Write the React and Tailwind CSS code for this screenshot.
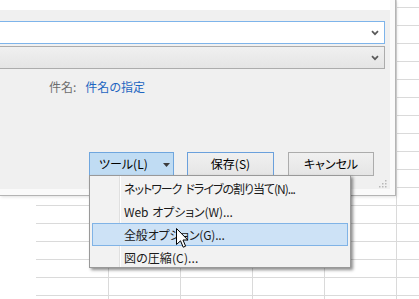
import React from "react";

const font = "font-['Noto_Sans_CJK_JP','Noto_Sans',sans-serif] [font-feature-settings:'palt']";

function Chevron() {
  return (
    <svg width="8" height="6" viewBox="0 0 8 6" className="absolute right-[5px] top-[8px]">
      <path d="M1 1.2 L4 4.2 L7 1.2" fill="none" stroke="#5a5a5a" strokeWidth="1.7" />
    </svg>
  );
}

export default function App() {
  const rows = Array.from({ length: 17 });
  const cols = Array.from({ length: 5 });
  const items = [
    { a: "ネットワーク", b: "ドライブの割り当て(N)...", cls: "tracking-[-1px]" },
    { a: "Web", b: "オプション(W)...", cls: "tracking-[-0.1px]" },
    { a: "全般オプション(G)...", b: null, cls: "tracking-[-0.2px]" },
    { a: "図の圧縮(C)...", b: null, cls: "tracking-[0.1px]" },
  ];
  return (
    <div className={`relative w-[419px] h-[299px] overflow-hidden bg-white ${font}`}>
      {/* spreadsheet grid (canvas) */}
      <div className="absolute inset-0 flex flex-col pl-[36px] pt-[7px]">
        {rows.map((_, i) => (
          <div key={i} className="h-[18px] shrink-0 border-t border-[#dadada]" />
        ))}
      </div>
      <div className="absolute inset-0 flex pl-[108px]">
        {cols.map((_, i) => (
          <div key={i} className="w-[72px] shrink-0 border-l border-[#dadada]" />
        ))}
      </div>

      {/* dialog window */}
      <div className="absolute left-0 top-0 w-[396px] h-[196px] bg-[#fafafa] border-r border-b border-[#b4b4b4] shadow-[1px_1px_3px_rgba(0,0,0,0.12)]">
        <div className="relative w-[390px] h-[189px] bg-[#f0f0f0] flex flex-col">
          <div className="h-[10px] bg-white" />
          <div className="relative mt-[11px] ml-[-1px] w-[386px] h-[23px] bg-white border border-[#7eb4ea]">
            <Chevron />
          </div>
          <div className="relative mt-[2px] ml-[-1px] w-[386px] h-[23px] bg-gradient-to-b from-[#f0f0f0] to-[#e5e5e5] border border-[#acacac]">
            <Chevron />
          </div>
          <div className="mt-[9px] h-[18px] flex items-center text-[12px] leading-[18px]">
            <span className="ml-[49px] text-[#6d6d6d]">件名:</span>
            <span className="ml-[9px] text-[#1e66c1]">件名の指定</span>
          </div>
          <div className="mt-[56px] flex pl-[89px] gap-[13px] text-[12px] text-black">
            <div className="relative w-[85px] h-[24px] bg-[#c0dcf3] border border-[#6fa6de] flex items-center">
              <span className="ml-[9px]">ツール(L)</span>
              <svg width="7" height="4" viewBox="0 0 7 4" className="absolute left-[73px] top-[10px]">
                <path d="M0 0 H7 L3.5 4 Z" fill="#3c3c3c" />
              </svg>
            </div>
            <div className="w-[87px] h-[24px] bg-gradient-to-b from-[#f0f0f0] to-[#e5e5e5] border border-[#6aa0dc] flex items-center justify-center">
              保存(S)
            </div>
            <div className="w-[86px] h-[24px] ml-px bg-gradient-to-b from-[#f0f0f0] to-[#e5e5e5] border border-[#acacac] flex items-center justify-center">
              キャンセル
            </div>
          </div>
          {/* resize grip */}
          <svg width="8" height="8" viewBox="0 0 8 8" className="absolute right-[3px] bottom-[1px]">
            {[[6, 0], [6, 3], [3, 3], [6, 6], [3, 6], [0, 6]].map(([x, y], i) => (
              <rect key={i} x={x} y={y} width="1.5" height="1.5" fill="#b8b8b8" />
            ))}
          </svg>
        </div>
      </div>

      {/* dropdown menu */}
      <div className="absolute left-[89px] top-[175px] w-[262px] h-[93px] bg-[#f2f2f2] border border-[#999999] shadow-[2px_2px_3px_rgba(0,0,0,0.45)] pt-[1px]">
        <div className="absolute left-[29px] top-0 bottom-0 w-px bg-[#e0e0e0]" />
        <div className="absolute left-[30px] top-0 bottom-0 w-px bg-white" />
        {items.map((t, i) => (
          <div
            key={i}
            className={
              i === 2
                ? "relative mx-[2px] h-[23px] flex items-center bg-[#cde2f6] border border-[#80b3e6] text-[12px] text-[#1a1a1a]"
                : "relative mx-[2px] h-[23px] flex items-center border border-transparent text-[12px] text-[#1a1a1a]"
            }
          >
            <span className={`ml-[31px] ${t.cls}`}>{t.a}</span>
            {t.b && <span className={`ml-[4px] ${t.cls}`}>{t.b}</span>}
          </div>
        ))}
      </div>

      {/* mouse cursor */}
      <svg width="13" height="21" viewBox="0 0 13 21" className="absolute left-[176px] top-[228px]">
        <path
          d="M0.5 0.5 L0.5 16.5 L4.5 12.8 L7.2 19.2 L9.6 18.2 L7 12 L11.8 12 Z"
          fill="white"
          stroke="black"
          strokeWidth="1"
          strokeLinejoin="miter"
        />
      </svg>
    </div>
  );
}
